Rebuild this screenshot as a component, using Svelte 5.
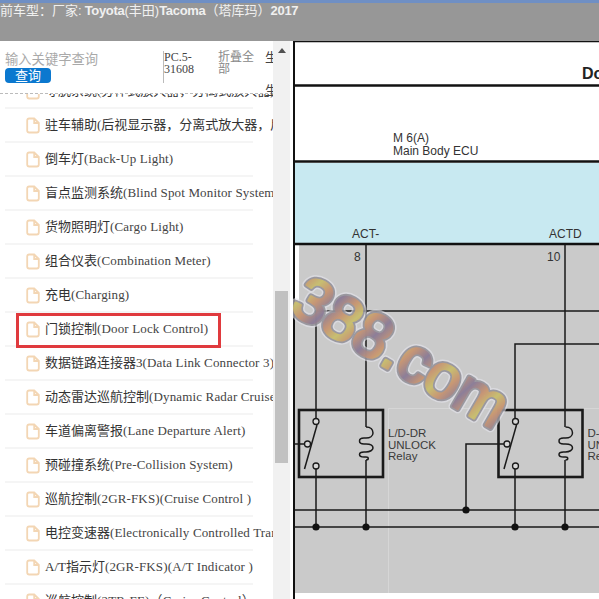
<script>
	const rows = [
		['寻朊系统(分体式放大器，分离式放大器)', '', true],
		['驻车辅助(后视显示器，分离式放大器，后视监视器)', ''],
		['倒车灯', '(Back-Up Light)'],
		['盲点监测系统', '(Blind Spot Monitor System)'],
		['货物照明灯', '(Cargo Light)'],
		['组合仪表', '(Combination Meter)'],
		['充电', '(Charging)'],
		['门锁控制', '(Door Lock Control)'],
		['数据链路连接器3', '(Data Link Connector 3)'],
		['动态雷达巡航控制', '(Dynamic Radar Cruise Control)'],
		['车道偏离警报', '(Lane Departure Alert)'],
		['预碰撞系统', '(Pre-Collision System)'],
		['巡航控制', '(2GR-FKS)(Cruise Control )'],
		['电控变速器', '(Electronically Controlled Transmission)'],
		['A/T指示灯', '(2GR-FKS)(A/T Indicator )'],
		['巡航控制', '(2TR-FE)（Cruise Control）']
	];
	const relays = [
		{ x: 299, label: ['L/D-DR', 'UNLOCK', 'Relay'] },
		{ x: 498.5, label: ['D-DR', 'UNLOCK', 'Relay'] }
	];
	const dots = [[316, 527], [366, 527], [515, 527], [565, 527], [466, 510]];
</script>

<div class="page">
	<header class="topbar">
		<div class="title">前车型：厂家:<b class="maker">Toyota</b>(丰田)<b>Tacoma</b>（塔库玛）<b>2017</b></div>
	</header>

	<div class="main">
		<aside class="sidebar">
			<div class="content">
				<div class="tools">
					<div class="search">
						<div class="placeholder">输入关键字查询</div>
						<button type="button" class="query">查询</button>
					</div>
					<div class="code">PC.5-31608</div>
					<div class="collapse">折叠全部</div>
					<div class="extra"><span>生</span><span>生</span></div>
				</div>
				<ul class="tree">
					{#each rows as row}
						<li class:active={row[1] === '(Door Lock Control)'}>
							<svg class="file" viewBox="0 0 14 17" width="14" height="17">
								<path d="M1.2 3.5q0-2 2-2h5l4.6 4.5v7.5q0 2-2 2h-7.6q-2 0-2-2z M8.2 1.5v4.5h4.6" />
							</svg>
							<span class="cn">{row[0]}</span><span class="en">{row[1]}</span>
						</li>
					{/each}
				</ul>
			</div>
			<div class="scrollbar">
				<span class="arrow"></span>
				<span class="thumb"></span>
			</div>
		</aside>

		<section class="sheet">
			<svg viewBox="293 41 306 558" width="306" height="558">
				<defs>
					<linearGradient id="mark" gradientUnits="userSpaceOnUse" x1="0" y1="0" x2="24" y2="8" spreadMethod="reflect">
						<stop offset="0" stop-color="#cfc66a" />
						<stop offset="0.45" stop-color="#d0976e" />
						<stop offset="1" stop-color="#8a7a98" />
					</linearGradient>
				</defs>

				<rect x="293" y="41" width="306" height="558" fill="#fff" />
				<rect x="295" y="163" width="304" height="80" fill="#c8e9f1" />
				<rect x="295" y="245" width="304" height="348" fill="#cacaca" />
				<rect x="295" y="245" width="4" height="66" fill="#fff" />
				<path class="seam" d="M388.5 593V408.5H599" />

				<g class="frame">
					<path d="M293.5 41.5H599" stroke-width="1.5" />
					<path d="M293.5 41V599" stroke-width="3" />
					<path d="M295 85.5H599" stroke-width="2.5" />
					<path d="M295 161.5H599" stroke-width="2.5" />
					<path d="M295 244H599" stroke-width="2.5" />
				</g>

				<text class="heading" x="582" y="79">Door Lock Control</text>
				<text class="ecu" x="393" y="142">M 6(A)</text>
				<text class="ecu" x="393" y="155">Main Body ECU</text>
				<text class="ecu" x="352" y="238">ACT-</text>
				<text class="ecu" x="549" y="238">ACTD</text>
				<text class="ecu" x="354" y="261">8</text>
				<text class="ecu" x="547" y="261">10</text>

				<g class="wire">
					<path d="M366 245V427M366 460V527" />
					<path d="M565 245V427M565 460V527" />
					<path d="M599 311H316V418M316 469V527" />
					<path d="M599 344H515V418M515 469V527" />
					<path d="M295 510H599M295 527H599" />
					<path d="M295 444H304M504 444H466V510" />
				</g>

				{#each dots as [cx, cy]}
					<circle {cx} {cy} r="3.6" fill="#111" />
				{/each}

				{#each relays as relay}
					<g transform="translate({relay.x - 299} 0)">
						<rect class="relay" x="299" y="410" width="84" height="67" />
						<g class="wire">
							<path d="M304.5 469L317 425" />
							<path d="M366 427c5 0 7 3 7 6s-3 5-7 5h-2c-6 0-6 6 0 6h2c5 0 7 2 7 4s-3 4-7 4h-2c-6 0-6 5 0 5h2c3 0 3 3 0 3" />
						</g>
						<circle class="node" cx="316" cy="421.5" r="3" />
						<circle class="node" cx="316" cy="466" r="3" />
						<circle class="node" cx="307.5" cy="444" r="3" />
						{#each relay.label as line, i}
							<text class="relay-label" x="388" y={437 + i * 11.7}>{line}</text>
						{/each}
					</g>
				{/each}

				<g class="watermark" transform="translate(288 311) rotate(30)">
					<text class="mark-halo">388.com</text>
					<text class="mark-edge">388.com</text>
					<text class="mark">388.com</text>
				</g>

				<rect x="295" y="593" width="304" height="6" fill="#fff" />
			</svg>
		</section>
	</div>
</div>

<style>
	:global(body) {
		margin: 0;
	}
	.page {
		width: 599px;
		height: 599px;
		overflow: hidden;
		display: flex;
		flex-direction: column;
		background: #fff;
	}
	.topbar {
		height: 38px;
		flex: none;
		border-top: 3px solid #6f8fc4;
		background: #979797;
	}
	.title {
		color: #f0f0f0;
		font: 13px/16px 'Liberation Sans', 'Noto Sans CJK SC', sans-serif;
		white-space: nowrap;
	}
	.title b {
		letter-spacing: -0.3px;
	}
	.title .maker {
		margin-left: 3px;
	}
	.main {
		flex: 1;
		min-height: 0;
		display: flex;
	}
	.sidebar {
		width: 293px;
		flex: none;
		display: flex;
	}
	.content {
		width: 273px;
		overflow: hidden;
		flex: none;
	}
	.tools {
		height: 52px;
		display: flex;
		border-bottom: 1px dashed #bbb;
		background: #fff;
		position: relative;
		z-index: 1;
	}
	.search {
		width: 158px;
		padding: 11px 0 0 5px;
		flex: none;
	}
	.placeholder {
		color: #a9a9a9;
		font: 13.3px/16px 'Liberation Sans', 'Noto Sans CJK SC', sans-serif;
	}
	.query {
		display: block;
		width: 46px;
		height: 15px;
		padding: 0;
		border: 0;
		border-radius: 4px;
		background: #0b78cf;
		color: #fff;
		font: 13px/15px 'Liberation Sans', 'Noto Sans CJK SC', sans-serif;
	}
	.code {
		width: 55px;
		height: 32px;
		margin-top: 10px;
		flex: none;
		box-sizing: border-box;
		border-left: 1px solid #bbb;
		color: #444;
		font: 12px/12px 'Liberation Serif', serif;
	}
	.collapse {
		width: 47px;
		padding-top: 10px;
		flex: none;
		color: #888;
		font: 12px/12px 'Liberation Sans', 'Noto Sans CJK SC', sans-serif;
	}
	.extra {
		display: flex;
		flex-direction: column;
		gap: 16px;
		padding-top: 8px;
		font: 13px/17px 'Liberation Sans', 'Noto Sans CJK SC', sans-serif;
		color: #444;
	}
	.tree {
		list-style: none;
		margin: -19px 0 0;
		padding: 0;
	}
	.tree li {
		position: relative;
		height: 34px;
		width: 248px;
		margin-left: 5px;
		padding-left: 21px;
		box-sizing: border-box;
		display: flex;
		align-items: center;
		gap: 5px;
		border-bottom: 2px solid #f5f5f5;
		white-space: nowrap;
		font: 13px/16px 'Liberation Serif', 'Noto Sans CJK SC', serif;
		color: #333;
	}
	.tree li.active::after {
		content: '';
		position: absolute;
		left: 11px;
		top: 0;
		width: 205px;
		height: 35px;
		box-sizing: border-box;
		border: 3px solid #e03a3e;
	}
	.file {
		flex: none;
		fill: none;
		stroke: #f3d6b4;
		stroke-width: 1.8;
	}
	.cn {
		margin-right: -5px;
	}
	.en {
		color: #444;
		letter-spacing: 0.15px;
	}
	.scrollbar {
		width: 17px;
		flex: none;
		position: relative;
		background: #f1f1f1;
	}
	.arrow {
		position: absolute;
		top: 7px;
		left: 5px;
		border: 4px solid transparent;
		border-top: 0;
		border-bottom: 5px solid #505050;
	}
	.thumb {
		position: absolute;
		top: 250px;
		left: 2px;
		width: 13px;
		height: 172px;
		background: #c1c1c1;
	}
	.sheet {
		flex: 1;
		min-width: 0;
		overflow: hidden;
	}
	.sheet svg {
		display: block;
	}
	.seam {
		fill: none;
		stroke: #d6d6d6;
		stroke-width: 1;
	}
	.frame path {
		fill: none;
		stroke: #111;
	}
	.wire path {
		fill: none;
		stroke: #1a1a1a;
		stroke-width: 1.5;
	}
	.relay {
		fill: none;
		stroke: #1a1a1a;
		stroke-width: 2.6;
	}
	.node {
		fill: #d8d8d8;
		stroke: #1a1a1a;
		stroke-width: 1.3;
	}
	text {
		font-family: 'Liberation Sans', sans-serif;
	}
	.heading {
		font-size: 16px;
		font-weight: 700;
		fill: #222;
	}
	.ecu {
		font-size: 12px;
		fill: #333;
	}
	.relay-label {
		font-size: 11.5px;
		fill: #3a3a3a;
	}
	.watermark text {
		font-size: 62px;
		stroke-linejoin: round;
	}
	.mark-halo {
		fill: none;
		stroke: #e6e6ee;
		stroke-width: 9;
		opacity: 0.6;
	}
	.mark-edge {
		fill: none;
		stroke: #85828a;
		stroke-width: 6;
		opacity: 0.75;
	}
	.mark {
		fill: url(#mark);
		stroke: url(#mark);
		stroke-width: 2.5;
		opacity: 0.85;
	}
</style>
